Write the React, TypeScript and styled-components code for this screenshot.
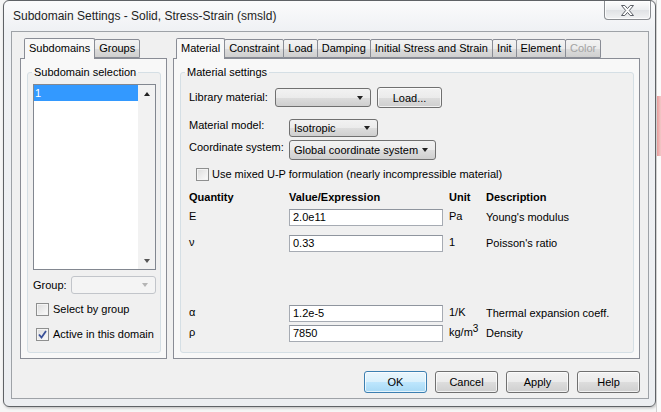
import React from "react";
import styled, { createGlobalStyle } from "styled-components";

const GlobalStyle = createGlobalStyle`
  html, body {
    margin: 0;
    padding: 0;
  }
  body {
    font-family: "Liberation Sans", Arial, sans-serif;
    font-size: 11px;
    color: #000;
  }
  * {
    box-sizing: border-box;
  }
`;

const Desktop = styled.div`
  display: flex;
  width: 661px;
  height: 412px;
  overflow: hidden;
  background: #f6f6f6;
  padding-left: 3px;
`;

const Window = styled.div`
  width: 653px;
  height: 407px;
  flex: none;
  display: flex;
  flex-direction: column;
  padding: 0 6px 7px 7px;
  border: 1px solid #5f6266;
  border-radius: 6px;
  background: linear-gradient(#fbfbfc, #eff1f4 30px, #eceef1);
  box-shadow: 1px 1px 3px rgba(0, 0, 0, 0.25);
`;

const BehindStrip = styled.div`
  flex: 1;
  display: flex;
  flex-direction: column;
  border-left: 1px solid #d0d0d0;
  background: #fbfbfb;
`;

const RedGlow = styled.div`
  margin-top: 96px;
  height: 60px;
  background: linear-gradient(90deg, #e89a9a, #f3c9c9);
`;

const TitleBar = styled.div`
  height: 30px;
  flex: none;
  display: flex;
  justify-content: space-between;
  align-items: flex-start;
`;

const Title = styled.div`
  font-size: 12px;
  padding: 8px 0 0 2px;
  color: #1e1e1e;
`;

const CloseButton = styled.div`
  width: 47px;
  height: 19px;
  margin-right: -2px;
  display: flex;
  align-items: center;
  justify-content: center;
  border: 1px solid #8a8d91;
  border-top: none;
  border-radius: 0 0 4px 4px;
  background: linear-gradient(#fdfdfd, #eceef0 50%, #e0e2e5 51%, #f1f2f3);
  box-shadow: inset 0 0 0 1px rgba(255, 255, 255, 0.8);
`;

const Client = styled.div`
  flex: 1;
  display: flex;
  flex-direction: column;
  padding: 5px 8px 0 8px;
  border: 1px solid #9ea2a7;
  background: #f0f0f0;
`;

const PanelRow = styled.div`
  display: flex;
  gap: 6px;
`;

const TabControl = styled.div<{ $width: number }>`
  width: ${(p) => p.$width}px;
  display: flex;
  flex-direction: column;
`;

const TabStrip = styled.div<{ $inset: number }>`
  height: 21px;
  display: flex;
  align-items: flex-end;
  padding-left: ${(p) => p.$inset}px;
  position: relative;
  z-index: 1;
`;

const Tab = styled.div<{ $active?: boolean; $disabled?: boolean }>`
  height: ${(p) => (p.$active ? 21 : 19)}px;
  margin-bottom: ${(p) => (p.$active ? -1 : 0)}px;
  margin-left: -1px;
  padding: ${(p) => (p.$active ? "3px 4px 0" : "2px 4px 0")};
  border: 1px solid #898c95;
  border-bottom: ${(p) => (p.$active ? "none" : "1px solid #898c95")};
  border-radius: 2px 2px 0 0;
  background: ${(p) =>
    p.$active
      ? "#f8f8f8"
      : "linear-gradient(#f3f3f3, #ebebeb 50%, #dddddd 51%, #cfcfcf)"};
  color: ${(p) => (p.$disabled ? "#a3a3a3" : "#000")};
  white-space: nowrap;
  &:first-child {
    margin-left: 0;
  }
`;

const TabPanel = styled.div`
  height: 301px;
  display: flex;
  flex-direction: column;
  padding: 13px 5px 5px 6px;
  border: 1px solid #898c95;
  background: #f8f8f8;
`;

const GroupBox = styled.div<{ $pad: string }>`
  flex: 1;
  position: relative;
  display: flex;
  flex-direction: column;
  padding: ${(p) => p.$pad};
  border: 1px solid #d5dfe5;
  border-radius: 3px;
  background: #f0f0f0;
`;

const GroupTitle = styled.div`
  position: absolute;
  top: -7px;
  left: 4px;
  padding: 0 2px;
  line-height: 13px;
  background: linear-gradient(#f8f8f8 50%, #f0f0f0 50%);
`;

const ListBox = styled.div`
  width: 123px;
  height: 186px;
  display: flex;
  border: 1px solid #828790;
  background: #fff;
`;

const ListItems = styled.div`
  flex: 1;
`;

const ListItem = styled.div<{ $selected?: boolean }>`
  height: 16px;
  line-height: 16px;
  padding-left: 1px;
  background: ${(p) => (p.$selected ? "#3399ff" : "transparent")};
  color: ${(p) => (p.$selected ? "#fff" : "#000")};
`;

const ScrollBar = styled.div`
  width: 17px;
  display: flex;
  flex-direction: column;
  justify-content: space-between;
  background: #f2f2f2;
`;

const ScrollButton = styled.div`
  height: 17px;
  display: flex;
  align-items: center;
  justify-content: center;
`;

const Arrow = styled.span<{ $up?: boolean; $color?: string }>`
  width: 0;
  height: 0;
  border-left: 3.5px solid transparent;
  border-right: 3.5px solid transparent;
  ${(p) =>
    p.$up
      ? `border-bottom: 4px solid ${p.$color ?? "#222"};`
      : `border-top: 4px solid ${p.$color ?? "#222"};`}
`;

const Row = styled.div<{ $top: number; $height: number; $indent?: number }>`
  display: flex;
  align-items: center;
  margin-top: ${(p) => p.$top}px;
  height: ${(p) => p.$height}px;
  margin-left: ${(p) => p.$indent ?? 0}px;
`;

const Label = styled.div<{ $width?: number; $shift?: number }>`
  width: ${(p) => (p.$width ? `${p.$width}px` : "auto")};
  flex: none;
  align-self: ${(p) => (p.$shift !== undefined ? "flex-start" : "center")};
  padding-top: ${(p) => p.$shift ?? 0}px;
  line-height: 13px;
  white-space: nowrap;
`;

const Combo = styled.div<{ $width: number; $disabled?: boolean }>`
  width: ${(p) => p.$width}px;
  height: 100%;
  display: flex;
  align-items: center;
  justify-content: space-between;
  padding: 0 7px 0 4px;
  border: 1px solid ${(p) => (p.$disabled ? "#c2c5ca" : "#707070")};
  border-radius: 3px;
  background: ${(p) =>
    p.$disabled
      ? "#f4f4f4"
      : "linear-gradient(#f2f2f2, #ebebeb 50%, #dddddd 51%, #cfcfcf)"};
  white-space: nowrap;
`;

const Button = styled.div<{ $width: number; $default?: boolean }>`
  width: ${(p) => p.$width}px;
  height: 100%;
  display: flex;
  align-items: center;
  justify-content: center;
  border: 1px solid ${(p) => (p.$default ? "#3c7fb1" : "#707070")};
  border-radius: 3px;
  background: ${(p) =>
    p.$default
      ? "linear-gradient(#eaf6fd, #d9f0fc 50%, #bee6fd 51%, #a7d9f5)"
      : "linear-gradient(#f2f2f2, #ebebeb 50%, #dddddd 51%, #cfcfcf)"};
  box-shadow: inset 0 0 0 1px rgba(255, 255, 255, 0.7);
`;

const CheckBox = styled.div`
  width: 13px;
  height: 13px;
  flex: none;
  display: flex;
  align-items: center;
  justify-content: center;
  border: 1px solid #8e8f8f;
  background: linear-gradient(135deg, #dcdcdc, #fcfcfc);
  box-shadow: inset 0 0 0 1px #f4f4f4;
`;

const CheckText = styled.span<{ $gap: number }>`
  margin-left: ${(p) => p.$gap}px;
  white-space: nowrap;
`;

const Cell = styled.div<{ $width?: number; $top?: boolean; $bold?: boolean }>`
  width: ${(p) => (p.$width ? `${p.$width}px` : "auto")};
  flex: ${(p) => (p.$width ? "none" : "1")};
  align-self: ${(p) => (p.$top ? "flex-start" : "center")};
  padding-top: ${(p) => (p.$top ? 1 : 0)}px;
  font-weight: ${(p) => (p.$bold ? "bold" : "normal")};
  line-height: 13px;
  white-space: nowrap;
`;

const Sup = styled.sup`
  font-size: 10px;
  line-height: 0;
  vertical-align: 4px;
`;

const TextInput = styled.div`
  width: 154px;
  height: 17px;
  display: flex;
  align-items: center;
  padding-left: 3px;
  border: 1px solid #a6abb3;
  border-top-color: #8f959e;
  background: #fff;
`;

const ButtonRow = styled.div`
  display: flex;
  justify-content: flex-end;
  gap: 8px;
  margin-top: 12px;
  height: 22px;
`;

const CloseGlyph = () => (
  <svg width="13" height="11" viewBox="0 0 13 11">
    <polygon
      points="0.5,0.5 3.8,0.5 6.5,3.6 9.2,0.5 12.5,0.5 8.3,5.5 12.5,10.5 9.2,10.5 6.5,7.4 3.8,10.5 0.5,10.5 4.7,5.5"
      fill="#fdfdfd"
      stroke="#5b5f66"
      strokeWidth="1"
      strokeLinejoin="round"
    />
  </svg>
);

const CheckMark = () => (
  <svg width="9" height="9" viewBox="0 0 9 9">
    <path d="M1 4.5 L3.5 7.5 L8 1" fill="none" stroke="#3a5199" strokeWidth="1.8" />
  </svg>
);

const quantities = [
  { symbol: "E", value: "2.0e11", unit: <>Pa</>, desc: "Young's modulus", top: 5 },
  { symbol: "ν", value: "0.33", unit: <>1</>, desc: "Poisson's ratio", top: 9 },
  {
    symbol: "α",
    value: "1.2e-5",
    unit: <>1/K</>,
    desc: "Thermal expansion coeff.",
    top: 53,
  },
  {
    symbol: "ρ",
    value: "7850",
    unit: (
      <>
        kg/m<Sup>3</Sup>
      </>
    ),
    desc: "Density",
    top: 3,
  },
];

const materialTabs = [
  "Material",
  "Constraint",
  "Load",
  "Damping",
  "Initial Stress and Strain",
  "Init",
  "Element",
  "Color",
];

export default function App() {
  return (
    <>
      <GlobalStyle />
      <Desktop>
        <Window>
          <TitleBar>
            <Title>Subdomain Settings - Solid, Stress-Strain (smsld)</Title>
            <CloseButton>
              <CloseGlyph />
            </CloseButton>
          </TitleBar>
          <Client>
            <PanelRow>
              <TabControl $width={147}>
                <TabStrip $inset={4}>
                  <Tab $active>Subdomains</Tab>
                  <Tab>Groups</Tab>
                </TabStrip>
                <TabPanel>
                  <GroupBox $pad="11px 4px 0 5px">
                    <GroupTitle>Subdomain selection</GroupTitle>
                    <ListBox>
                      <ListItems>
                        <ListItem $selected>1</ListItem>
                      </ListItems>
                      <ScrollBar>
                        <ScrollButton>
                          <Arrow $up />
                        </ScrollButton>
                        <ScrollButton>
                          <Arrow $color="#555" />
                        </ScrollButton>
                      </ScrollBar>
                    </ListBox>
                    <Row $top={6} $height={18}>
                      <Label $width={38}>Group:</Label>
                      <Combo $width={85} $disabled>
                        <span />
                        <Arrow $color="#b5b5b5" />
                      </Combo>
                    </Row>
                    <Row $top={8} $height={14} $indent={3}>
                      <CheckBox />
                      <CheckText $gap={4}>Select by group</CheckText>
                    </Row>
                    <Row $top={11} $height={14} $indent={3}>
                      <CheckBox>
                        <CheckMark />
                      </CheckBox>
                      <CheckText $gap={4}>Active in this domain</CheckText>
                    </Row>
                  </GroupBox>
                </TabPanel>
              </TabControl>

              <TabControl $width={467}>
                <TabStrip $inset={3}>
                  {materialTabs.map((t, i) => (
                    <Tab key={t} $active={i === 0} $disabled={t === "Color"}>
                      {t}
                    </Tab>
                  ))}
                </TabStrip>
                <TabPanel>
                  <GroupBox $pad="14px 0 0 8px">
                    <GroupTitle>Material settings</GroupTitle>
                    <Row $top={0} $height={21}>
                      <Label $width={86}>Library material:</Label>
                      <Combo $width={96} style={{ height: 19 }}>
                        <span />
                        <Arrow />
                      </Combo>
                      <Row $top={0} $height={21} $indent={6}>
                        <Button $width={65}>Load...</Button>
                      </Row>
                    </Row>
                    <Row $top={11} $height={18}>
                      <Label $width={100} $shift={0}>
                        Material model:
                      </Label>
                      <Combo $width={89}>
                        <span>Isotropic</span>
                        <Arrow />
                      </Combo>
                    </Row>
                    <Row $top={3} $height={20}>
                      <Label $width={100} $shift={1}>
                        Coordinate system:
                      </Label>
                      <Combo $width={147}>
                        <span>Global coordinate system</span>
                        <Arrow />
                      </Combo>
                    </Row>
                    <Row $top={7} $height={14} $indent={7}>
                      <CheckBox />
                      <CheckText $gap={3}>
                        Use mixed U-P formulation (nearly incompressible material)
                      </CheckText>
                    </Row>
                    <Row $top={9} $height={14}>
                      <Cell $width={100} $bold>
                        Quantity
                      </Cell>
                      <Cell $width={160} $bold>
                        Value/Expression
                      </Cell>
                      <Cell $width={37} $bold>
                        Unit
                      </Cell>
                      <Cell $bold>Description</Cell>
                    </Row>
                    {quantities.map((q) => (
                      <Row key={q.symbol} $top={q.top} $height={17}>
                        <Cell $width={100} $top>
                          {q.symbol}
                        </Cell>
                        <Cell $width={160}>
                          <TextInput>{q.value}</TextInput>
                        </Cell>
                        <Cell $width={37} $top>
                          {q.unit}
                        </Cell>
                        <Cell>{q.desc}</Cell>
                      </Row>
                    ))}
                  </GroupBox>
                </TabPanel>
              </TabControl>
            </PanelRow>
            <ButtonRow>
              <Button $width={63} $default>
                OK
              </Button>
              <Button $width={63}>Cancel</Button>
              <Button $width={63}>Apply</Button>
              <Button $width={63}>Help</Button>
            </ButtonRow>
          </Client>
        </Window>
        <BehindStrip>
          <RedGlow />
        </BehindStrip>
      </Desktop>
    </>
  );
}
